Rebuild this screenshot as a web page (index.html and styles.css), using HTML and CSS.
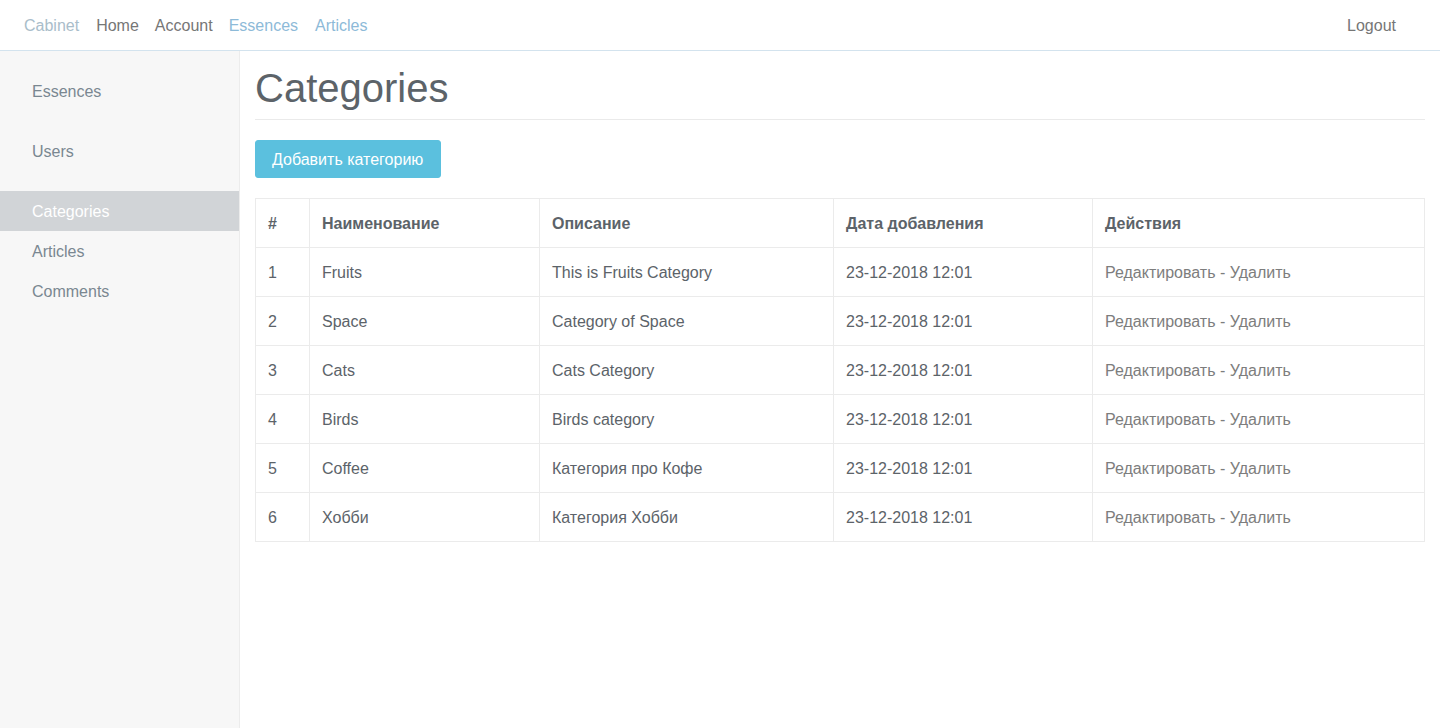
FILE: index.html
```html
<!DOCTYPE html>
<html lang="ru">
<head>
<meta charset="utf-8">
<title>Categories</title>
<link rel="stylesheet" href="styles.css">
</head>
<body>
<header class="navbar">
  <nav class="nav-left">
    <a class="brand" href="#">Cabinet</a>
    <a class="nav-link" href="#">Home</a>
    <a class="nav-link" href="#">Account</a>
    <a class="nav-link nav-link-accent" href="#">Essences</a>
    <a class="nav-link nav-link-accent" href="#">Articles</a>
  </nav>
  <a class="nav-link logout" href="#">Logout</a>
</header>
<div class="layout">
  <aside class="sidebar">
    <ul class="side-nav"><li><a href="#">Essences</a></li></ul>
    <ul class="side-nav"><li><a href="#">Users</a></li></ul>
    <ul class="side-nav">
      <li><a class="active" href="#">Categories</a></li>
      <li><a href="#">Articles</a></li>
      <li><a href="#">Comments</a></li>
    </ul>
  </aside>
  <main class="main">
    <h1 class="page-title">Categories</h1>
    <a class="btn-info" href="#">Добавить категорию</a>
    <table class="table">
      <colgroup>
        <col class="c1"><col class="c2"><col class="c3"><col class="c4"><col class="c5">
      </colgroup>
      <thead>
        <tr><th>#</th><th>Наименование</th><th>Описание</th><th>Дата добавления</th><th>Действия</th></tr>
      </thead>
      <tbody>
        <tr><td>1</td><td>Fruits</td><td>This is Fruits Category</td><td>23-12-2018 12:01</td><td><a href="#">Редактировать</a> - <a href="#">Удалить</a></td></tr>
        <tr><td>2</td><td>Space</td><td>Category of Space</td><td>23-12-2018 12:01</td><td><a href="#">Редактировать</a> - <a href="#">Удалить</a></td></tr>
        <tr><td>3</td><td>Cats</td><td>Cats Category</td><td>23-12-2018 12:01</td><td><a href="#">Редактировать</a> - <a href="#">Удалить</a></td></tr>
        <tr><td>4</td><td>Birds</td><td>Birds category</td><td>23-12-2018 12:01</td><td><a href="#">Редактировать</a> - <a href="#">Удалить</a></td></tr>
        <tr><td>5</td><td>Coffee</td><td>Категория про Кофе</td><td>23-12-2018 12:01</td><td><a href="#">Редактировать</a> - <a href="#">Удалить</a></td></tr>
        <tr><td>6</td><td>Хобби</td><td>Категория Хобби</td><td>23-12-2018 12:01</td><td><a href="#">Редактировать</a> - <a href="#">Удалить</a></td></tr>
      </tbody>
    </table>
  </main>
</div>
</body>
</html>
```
FILE: styles.css
```css
* { box-sizing: border-box; }
html, body { margin: 0; padding: 0; height: 100%; }
body {
  font-family: "Liberation Sans", Arial, sans-serif;
  font-size: 16px;
  line-height: 1.5;
  color: #5c6369;
  background: #fff;
}
a { text-decoration: none; }

.navbar {
  height: 51px;
  border-bottom: 1px solid #d3e3ee;
  display: flex;
  align-items: center;
  justify-content: space-between;
  padding: 2px 36px 0 16px;
}
.nav-left { display: flex; align-items: center; }
.brand {
  color: #a9bdca;
  padding: 0 8px;
  margin-right: 1px;
}
.nav-link { color: #767676; padding: 0 8px; }
.nav-link-accent { color: #8dbad8; }
.nav-link-accent + .nav-link-accent { margin-left: 1px; }
.logout { color: #767676; }

.layout {
  display: flex;
  min-height: calc(100% - 51px);
}
.sidebar {
  width: 240px;
  flex: none;
  background: #f7f7f7;
  border-right: 1px solid #ececec;
  padding-top: 20px;
}
.side-nav {
  list-style: none;
  margin: 0 0 20px;
  padding: 0;
}
.side-nav a {
  display: block;
  height: 40px;
  line-height: 24px;
  padding: 9px 32px 7px;
  color: #7a8791;
}
.side-nav a.active {
  background: #d1d4d7;
  color: #fff;
}

.main {
  flex: 1;
  padding: 0 15px;
}
.page-title {
  font-size: 40px;
  font-weight: 400;
  line-height: 48px;
  margin: 13px 0 20px;
  padding-bottom: 7px;
  border-bottom: 1px solid #eaeaea;
  color: #5c6369;
}
.btn-info {
  display: inline-block;
  background: #5bc0de;
  color: #fff;
  border: 1px solid #5bc0de;
  border-radius: 3px;
  padding: 7px 17px 5px 16px;
  line-height: 24px;
  font-size: 16px;
}
.table {
  margin-top: 20px;
  width: 100%;
  border-collapse: collapse;
  table-layout: fixed;
}
.c1 { width: 54px; }
.c2 { width: 230px; }
.c3 { width: 294px; }
.c4 { width: 259px; }
.c5 { width: auto; }
.table th, .table td {
  border: 1px solid #ebebeb;
  padding: 13px 12px 11px;
  text-align: left;
  vertical-align: top;
  line-height: 24px;
  white-space: nowrap;
}
.table th { font-weight: 700; color: #5c6369; }
.table td a { color: #7d7d7d; }
.table td:last-child { color: #7d7d7d; }
```
